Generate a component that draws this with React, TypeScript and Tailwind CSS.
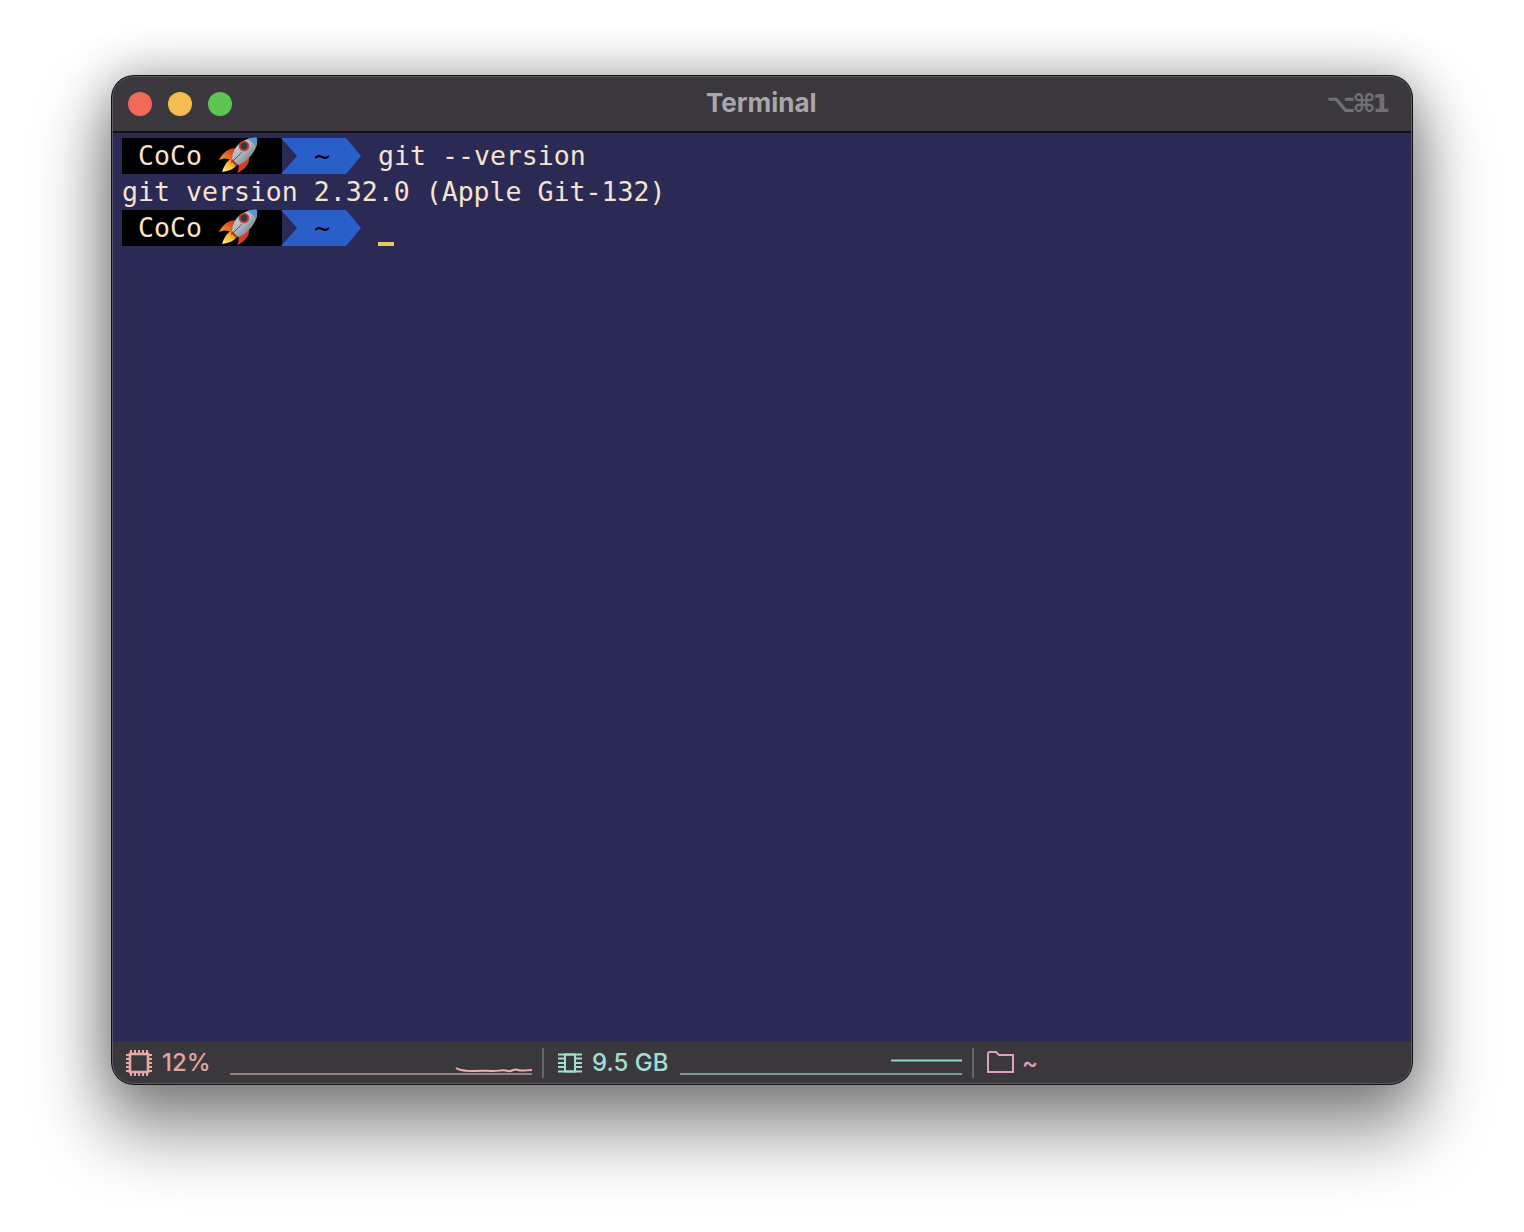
import React from "react";

const Rocket = () => (
  <svg width="40" height="38" viewBox="0 0 40 38" className="shrink-0">
    <defs>
      <linearGradient id="rocketBody" x1="0" y1="0" x2="1" y2="1">
        <stop offset="0" stopColor="#d5dbe1" />
        <stop offset="0.5" stopColor="#aab4bd" />
        <stop offset="1" stopColor="#4f5963" />
      </linearGradient>
      <linearGradient id="rocketFlame" x1="1" y1="0" x2="0" y2="1">
        <stop offset="0" stopColor="#e8561f" />
        <stop offset="0.5" stopColor="#fbb92d" />
        <stop offset="1" stopColor="#fff0a0" />
      </linearGradient>
      <linearGradient id="rocketFin" x1="1" y1="0" x2="0" y2="1">
        <stop offset="0" stopColor="#c9301f" />
        <stop offset="1" stopColor="#f59a2c" />
      </linearGradient>
    </defs>
    {/* fins */}
    <path d="M18 12 C11 12 5 16 1 24 C5 22 9 22 13 24 L16 18 Z" fill="url(#rocketFin)" />
    <path d="M31 21 C32 27 28 33 19 37 C21 33 21 30 20 28 Z" fill="#d63c22" />
    {/* flame */}
    <path d="M15 22 C9 24 6 30 4 36 C11 35 17 33 20 27 Z" fill="url(#rocketFlame)" />
    {/* body */}
    <path d="M39 2 C31 1 22 5 17 13 C15 17 14 20 14 23 L20 29 C24 28 27 26 30 23 C36 17 40 10 39 2 Z" fill="url(#rocketBody)" />
    <path d="M39 2 C36 1.6 33 2 30 3 C33 5 36 8 38 11 C39 8 39.4 5 39 2 Z" fill="#5b93cc" />
    <path d="M14 23 L20 29 L18 30 L13 25 Z" fill="#a83a24" />
    <path d="M13 27 L24 16" stroke="#8a4a2a" strokeWidth="1" />
    {/* porthole */}
    <circle cx="26" cy="10" r="5.2" fill="#d0392c" />
    <circle cx="26" cy="10" r="3.4" fill="#2e3a4a" />
  </svg>
);

const Prompt = ({ children }: { children?: React.ReactNode }) => (
  <div className="flex h-9 items-center">
    <div className="flex h-9 w-40 items-center bg-black pl-4 text-[#f6e3cf]">
      <span>CoCo</span>
      <span className="ml-4 -mt-0.5">
        <Rocket />
      </span>
    </div>
    <div className="-ml-px flex h-9 w-[80px] items-center bg-[#2a5fc9] pl-[33px] text-black [clip-path:polygon(0_0,65px_0,100%_50%,65px_100%,0_100%,16px_50%)]">
      ~
    </div>
    <div className="ml-[17px]">{children}</div>
  </div>
);

export default function App() {
  return (
    <div className="flex h-[1232px] justify-center bg-white pt-[76px]">
      <div className="relative flex h-[1008px] w-[1300px] flex-col overflow-hidden rounded-[22px] bg-[#3a373d] shadow-[0_0_0_1px_#111,0_40px_70px_10px_rgba(0,0,0,0.42),0_0_50px_rgba(0,0,0,0.3)]">
        {/* title bar */}
        <div className="relative flex h-[57px] shrink-0 items-center border-b-2 border-[#121113] pl-4 pr-[25px]">
          <div className="flex gap-4">
            <span className="h-6 w-6 rounded-full bg-[#f2695c]" />
            <span className="h-6 w-6 rounded-full bg-[#f5bd4f]" />
            <span className="h-6 w-6 rounded-full bg-[#5ec454]" />
          </div>
          <div className="-mt-0.5 flex-1 text-center font-['Inter',sans-serif] text-[26px] font-bold text-[#a9a7ab]">
            <span className="-ml-[36px] inline-block">Terminal</span>
          </div>
          <div className="font-['DejaVu_Sans',sans-serif] text-[25px] font-bold tracking-[-3px] text-[#737175]">
            ⌥⌘1
          </div>
        </div>

        {/* terminal body */}
        <div className="flex-1 bg-[#2a2a55] pl-[10px] pt-[5px] font-['DejaVu_Sans_Mono',monospace] text-[26.55px] leading-9 text-[#f6e3cf]">
          <Prompt>git --version</Prompt>
          <div className="h-9">git version 2.32.0 (Apple Git-132)</div>
          <Prompt>
            <div className="mt-[32px] h-1 w-4 bg-[#ecc75f]" />
          </Prompt>
        </div>

        {/* status bar */}
        <div className="flex h-[42px] shrink-0 items-center bg-[#3a373d] pl-[13px] font-['Inter',sans-serif] text-[24px] font-medium">
          <svg width="28" height="28" viewBox="0 0 28 28" fill="none" stroke="#e8a9a6" strokeWidth="2" className="shrink-0">
            <rect x="5" y="5" width="18" height="18" strokeWidth="2.6" />
            <path d="M6 1V5M10 1V5M14 1V5M18 1V5M22 1V5M6 23V27M10 23V27M14 23V27M18 23V27M22 23V27M1 6H5M1 10H5M1 14H5M1 18H5M1 22H5M23 6H27M23 10H27M23 14H27M23 18H27M23 22H27" />
          </svg>
          <span className="ml-[9px] w-[68px] shrink-0 text-[#e5a5a2]">12%</span>
          <svg width="302" height="30" viewBox="0 0 302 30" fill="none" className="shrink-0">
            <path d="M0 26H302" stroke="#a07c7c" strokeWidth="2" />
            <path d="M226 20 C230 23 236 23 244 23 C252 23 256 22.5 262 23 C268 23.5 272 21 278 23 C282 24 284 20 288 22 C292 23.5 296 22 302 22" stroke="#eeb2ae" strokeWidth="2" />
          </svg>
          <div className="mx-[10px] h-[30px] w-0.5 shrink-0 bg-[#67646a]" />
          <svg width="26" height="20" viewBox="0 0 26 20" fill="none" stroke="#9fe0cf" strokeWidth="2" className="ml-[3px] shrink-0">
            <path d="M8 1.5H18V18.5H8Z" />
            <path d="M1 1.5H25M1 5.5H8M18 5.5H25M1 10H8M18 10H25M1 14H8M18 14H25M1 18.5H25" />
          </svg>
          <span className="ml-[9px] w-[88px] shrink-0 text-[#a3dfd0]">9.5 GB</span>
          <svg width="282" height="30" viewBox="0 0 282 30" fill="none" className="shrink-0">
            <path d="M0 26H282" stroke="#7a9b95" strokeWidth="2" />
            <path d="M211 12.5H282" stroke="#8fd8c4" strokeWidth="2" />
          </svg>
          <div className="mx-[10px] h-[30px] w-0.5 shrink-0 bg-[#67646a]" />
          <svg width="27" height="22" viewBox="0 0 27 22" fill="none" stroke="#e0a0c0" strokeWidth="2" className="ml-[3px] -mt-0.5 shrink-0">
            <path d="M1 21V3C1 2 2 1 3 1H9L12 4H26V21Z" />
          </svg>
          <span className="ml-[8px] text-[#e0a0c0]">~</span>
        </div>

        {/* inner highlight on the window edge */}
        <div className="pointer-events-none absolute inset-0 rounded-[22px] border border-[#6f6c72]/70" />
      </div>
    </div>
  );
}
